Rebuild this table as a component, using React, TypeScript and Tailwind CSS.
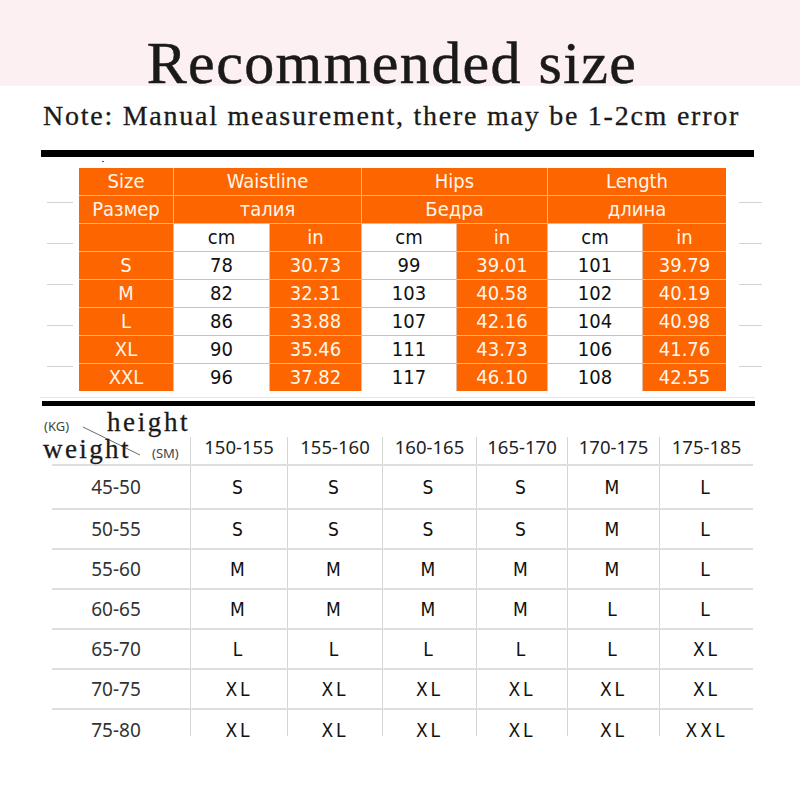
import React from 'react';

const serif = { fontFamily: '"Liberation Serif", "Times New Roman", serif' };
const tahoma = { fontFamily: '"DejaVu Sans Condensed", "Open Sans", sans-serif' };
const noto = { fontFamily: '"Noto Sans", "Open Sans", sans-serif' };
const narrow = { fontFamily: '"Liberation Sans Narrow", "DejaVu Sans Condensed", "Roboto", sans-serif' };

const measures = [
  ['S', '78', '30.73', '99', '39.01', '101', '39.79'],
  ['M', '82', '32.31', '103', '40.58', '102', '40.19'],
  ['L', '86', '33.88', '107', '42.16', '104', '40.98'],
  ['XL', '90', '35.46', '111', '43.73', '106', '41.76'],
  ['XXL', '96', '37.82', '117', '46.10', '108', '42.55'],
];

const heights = ['150-155', '155-160', '160-165', '165-170', '170-175', '175-185'];

const chart: [string, string[]][] = [
  ['45-50', ['S', 'S', 'S', 'S', 'M', 'L']],
  ['50-55', ['S', 'S', 'S', 'S', 'M', 'L']],
  ['55-60', ['M', 'M', 'M', 'M', 'M', 'L']],
  ['60-65', ['M', 'M', 'M', 'M', 'L', 'L']],
  ['65-70', ['L', 'L', 'L', 'L', 'L', 'XL']],
  ['70-75', ['XL', 'XL', 'XL', 'XL', 'XL', 'XL']],
  ['75-80', ['XL', 'XL', 'XL', 'XL', 'XL', 'XXL']],
];

const orange = 'bg-[#fd6500] text-[#fff6ec]';
const white = 'bg-white text-[#111111]';

function Cell({ children, cls, span }: { children?: React.ReactNode; cls: string; span?: boolean }) {
  return (
    <div className={`${cls} ${span ? 'col-span-2' : ''} flex items-center justify-center text-[20px] leading-[27px]`}>
      {children}
    </div>
  );
}

// decorative short grey lines beside the measurement table
function SideTicks({ w }: { w: string }) {
  return (
    <div className={`${w} flex flex-col pt-[34px] gap-[40px]`}>
      {[0, 1, 2, 3, 4].map(i => <div key={i} className="h-px bg-[#d2d2d2]" />)}
    </div>
  );
}

function MeasureTable() {
  return (
    <div className="flex pl-[47px] gap-[6px]">
      <SideTicks w="w-[26px]" />
      <div style={tahoma} className="grid grid-cols-[94px_95px_91px_94px_90px_94px_83px] auto-rows-[27px] gap-px bg-[#e4bba2]">
        <Cell cls={orange}>Size</Cell>
        <Cell cls={orange} span>Waistline</Cell>
        <Cell cls={orange} span>Hips</Cell>
        <Cell cls={orange} span>Length</Cell>
        <Cell cls={orange}>Размер</Cell>
        <Cell cls={orange} span>талия</Cell>
        <Cell cls={orange} span>Бедра</Cell>
        <Cell cls={orange} span>длина</Cell>
        <Cell cls={orange} />
        <Cell cls={white}>cm</Cell>
        <Cell cls={orange}>in</Cell>
        <Cell cls={white}>cm</Cell>
        <Cell cls={orange}>in</Cell>
        <Cell cls={white}>cm</Cell>
        <Cell cls={orange}>in</Cell>
        {measures.map(row =>
          row.map((v, i) => (
            <Cell key={row[0] + i} cls={i === 0 || i % 2 === 0 ? orange : white}>{v}</Cell>
          ))
        )}
      </div>
      <div className="w-px" />
      <SideTicks w="w-[23px]" />
    </div>
  );
}

function CornerHeader() {
  return (
    <div className="relative h-[58px]">
      <svg className="absolute left-0 top-0" width="138" height="58">
        <line x1="31" y1="21" x2="88" y2="49" stroke="#6b6b6b" strokeWidth="1" />
      </svg>
      <span style={noto} className="absolute left-[-8px] top-[13px] text-[13px] leading-[14px] text-[#444]">(KG)</span>
      <span style={serif} className="absolute left-[55px] top-[4px] text-[27px] leading-[24px] tracking-[2.6px] text-[#1a1a1a] [-webkit-text-stroke:0.3px_#1a1a1a]">height</span>
      <span style={serif} className="absolute left-[-9px] top-[31px] text-[27px] leading-[24px] tracking-[2.4px] text-[#1a1a1a] [-webkit-text-stroke:0.3px_#1a1a1a]">weight</span>
      <span style={noto} className="absolute left-[100px] top-[40px] text-[13px] leading-[14px] text-[#444]">(SM)</span>
    </div>
  );
}

function SizeChart() {
  const grid = 'grid grid-cols-[138px_97px_95px_94px_91px_92px_94px]';
  return (
    <div className="ml-[52px] w-[701px]">
      <div className={`${grid} border-b-2 border-[#dedede]`}>
        <CornerHeader />
        {heights.map(h => (
          <div key={h} className="flex flex-col justify-end">
            <div style={noto} className="h-[27px] border-l border-[#d4d4d4] text-center text-[18.5px] leading-[20px] text-[#222]">
              {h}
            </div>
          </div>
        ))}
      </div>
      {chart.map(([w, sizes], r) => {
        const last = r === chart.length - 1;
        const h = r === 0 ? 'h-[42px]' : last ? 'h-[26px]' : 'h-[38px]';
        return (
          <div key={w} className={`${grid} ${last ? '' : 'border-b-2 border-[#dedede]'}`}>
            <div style={noto} className={`${h} pr-[10px] text-center text-[19px] text-[#333] ${last ? 'leading-[40px]' : 'flex items-center justify-center'}`}>
              {w}
            </div>
            {sizes.map((s, i) => (
              <div
                key={i}
                style={narrow}
                className={`${h} border-l border-[#d4d4d4] text-center text-[19px] tracking-[3px] text-[#111] ${last ? 'leading-[40px]' : 'flex items-center justify-center'}`}
              >
                {s}
              </div>
            ))}
          </div>
        );
      })}
    </div>
  );
}

export default function App() {
  return (
    <div className="w-[800px] h-[800px] bg-white overflow-hidden">
      <div className="h-[86px] bg-[#fdf0f3]">
        <h1 style={serif} className="pt-[33px] pr-[16px] text-center text-[60px] leading-[60px] tracking-[1.4px] text-[#1a1a1a] [-webkit-text-stroke:0.5px_#1a1a1a]">
          Recommended size
        </h1>
      </div>
      <p style={serif} className="mt-[16px] ml-[43px] text-[28px] leading-[28px] tracking-[1.75px] text-[#1a1a1a] whitespace-nowrap [-webkit-text-stroke:0.3px_#1a1a1a]">
        Note: Manual measurement, there may be 1-2cm error
      </p>
      <div className="mt-[20px] ml-[41px] w-[713px] h-[7px] bg-black" />
      <div className="mt-[4px] ml-[102px] w-[2px] h-[1px] bg-[#555]" />
      <div className="mt-[6px]">
        <MeasureTable />
      </div>
      <div className="mt-[6px] ml-[40px] w-[715px] h-px bg-[#e6e6e6]" />
      <div className="mt-[3px] ml-[42px] w-[713px] h-[5px] bg-black" />
      <SizeChart />
    </div>
  );
}
